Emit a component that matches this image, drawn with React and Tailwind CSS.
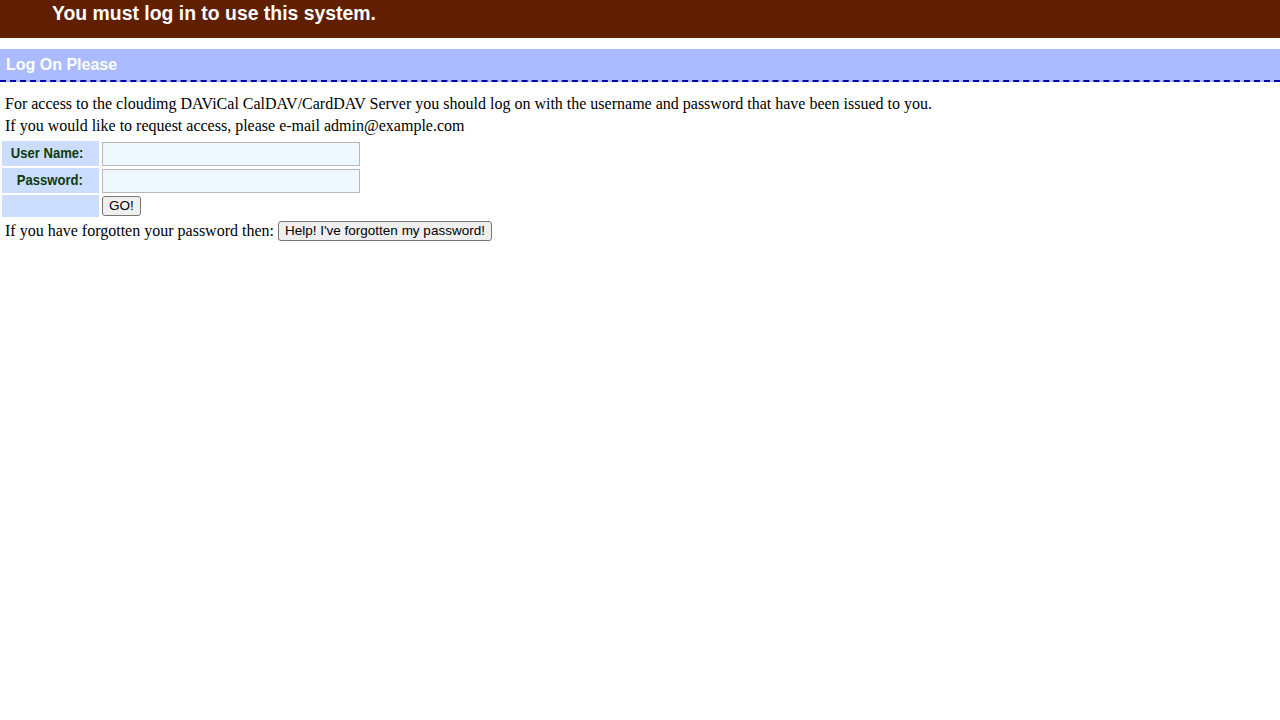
import React from 'react';

const labelCell = "bg-[#ccddff] w-[97px] h-[25px] p-0 pr-[16px] text-right align-middle font-bold text-[15px] text-[#0b3b0b] [font-family:'Liberation_Sans',Arial,sans-serif]";
const inputCls = "block w-[258px] h-[24px] bg-[#eef9ff] border border-[#b8b8b8] px-[2px] text-[13px] outline-none";
const btnCls = "h-[20px] px-[6px] bg-[#efefef] border border-[#767676] rounded-[3px] text-[13.5px] leading-none text-black [font-family:'Liberation_Sans',Arial,sans-serif]";

// narrow bold label text, squeezed horizontally inside a fixed box
const Label = ({ children }) => (
  <span className="flex w-[81px] justify-end">
    <span className="inline-block origin-right scale-x-[0.87] whitespace-nowrap">{children}</span>
  </span>
);

const LoginForm = () => (
  <table className="table-fixed border-separate border-spacing-[2px] mt-[2px] w-[364px]">
    <colgroup>
      <col className="w-[97px]" />
      <col className="w-[261px]" />
    </colgroup>
    <tbody>
      <tr>
        <th className={labelCell}><Label>User Name:</Label></th>
        <td className="p-0 pl-[1px] align-middle">
          <input type="text" name="username" className={inputCls} />
        </td>
      </tr>
      <tr>
        <th className={labelCell}><Label>Password:</Label></th>
        <td className="p-0 pl-[1px] align-middle">
          <input type="password" name="password" className={inputCls} />
        </td>
      </tr>
      <tr>
        <th className="bg-[#ccddff] h-[22px] p-0"></th>
        <td className="p-0 pl-[1px] align-middle">
          <button className={`${btnCls} block`}>GO!</button>
        </td>
      </tr>
    </tbody>
  </table>
);

export default function App() {
  return (
    <div className="min-h-[720px] bg-white text-black text-[16px] [font-family:'Liberation_Serif','Times_New_Roman',serif]">
      <div className="h-[38px] bg-[#602000] pl-[52px]">
        <h1 className="text-[19.4px] leading-[26px] font-bold text-white [font-family:'Liberation_Sans',Arial,sans-serif]">
          You must log in to use this system.
        </h1>
      </div>

      <div className="mt-[11px] h-[33px] bg-[#aabbff] border-b-2 border-dashed border-[#0000aa] px-[6px]">
        <h2 className="text-[16px] leading-[31px] font-bold text-white [font-family:'Liberation_Sans',Arial,sans-serif]">
          Log On Please
        </h2>
      </div>

      <div className="pt-[11px] pl-[5px] leading-[22px]">
        <p>For access to the cloudimg DAViCal CalDAV/CardDAV Server you should log on with the username and password that have been issued to you.</p>
        <p>If you would like to request access, please e-mail admin@example.com</p>
      </div>

      <LoginForm />

      <div className="mt-[1px] pl-[5px] h-[22px] leading-[22px] flex items-center">
        <span>If you have forgotten your password then:</span>
        <button className={`${btnCls} ml-[4px]`}>Help! I've forgotten my password!</button>
      </div>
    </div>
  );
}
